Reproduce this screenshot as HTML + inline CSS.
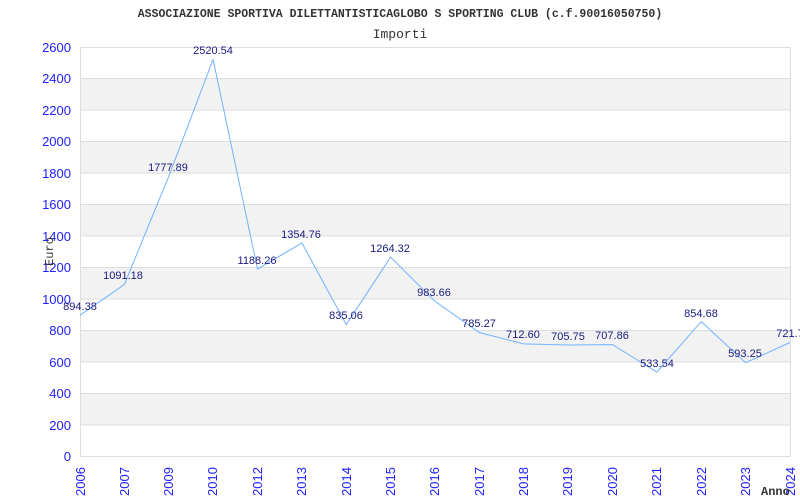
<!DOCTYPE html>
<html><head><meta charset="utf-8"><style>body{margin:0;background:#fff}svg{display:block}</style></head>
<body>
<svg width="800" height="500" xmlns="http://www.w3.org/2000/svg">
<rect width="800" height="500" fill="#fff"/>
<text x="400" y="17" text-anchor="middle" font-family="Liberation Mono, monospace" font-weight="bold" font-size="11.5" fill="#333">ASSOCIAZIONE SPORTIVA DILETTANTISTICAGLOBO S SPORTING CLUB (c.f.90016050750)</text>
<text x="400" y="38" text-anchor="middle" font-family="Liberation Mono, monospace" font-size="13" fill="#333">Importi</text>
<g fill="#f2f2f2">
<rect x="80.5" y="78.5" width="710" height="31.5"/>
<rect x="80.5" y="141.4" width="710" height="31.5"/>
<rect x="80.5" y="204.3" width="710" height="31.5"/>
<rect x="80.5" y="267.2" width="710" height="31.5"/>
<rect x="80.5" y="330.2" width="710" height="31.5"/>
<rect x="80.5" y="393.1" width="710" height="31.5"/>
</g>
<g stroke="#ddd" stroke-width="1">
<line x1="80" y1="47.5" x2="790" y2="47.5"/><line x1="80" y1="78.5" x2="790" y2="78.5"/><line x1="80" y1="110" x2="790" y2="110"/><line x1="80" y1="141.5" x2="790" y2="141.5"/><line x1="80" y1="173" x2="790" y2="173"/><line x1="80" y1="204.5" x2="790" y2="204.5"/><line x1="80" y1="236" x2="790" y2="236"/><line x1="80" y1="267.5" x2="790" y2="267.5"/><line x1="80" y1="299" x2="790" y2="299"/><line x1="80" y1="330.5" x2="790" y2="330.5"/><line x1="80" y1="362" x2="790" y2="362"/><line x1="80" y1="393.5" x2="790" y2="393.5"/><line x1="80" y1="425" x2="790" y2="425"/><line x1="80" y1="456.5" x2="790.5" y2="456.5"/>
<line x1="80.5" y1="47" x2="80.5" y2="457"/><line x1="790.5" y1="47" x2="790.5" y2="457"/>
</g>
<g font-family="Liberation Sans, sans-serif" font-size="13" fill="#2020ff" text-anchor="end">
<text x="71" y="52">2600</text><text x="71" y="83">2400</text><text x="71" y="115">2200</text><text x="71" y="146">2000</text><text x="71" y="178">1800</text><text x="71" y="209">1600</text><text x="71" y="241">1400</text><text x="71" y="272">1200</text><text x="71" y="304">1000</text><text x="71" y="335">800</text><text x="71" y="367">600</text><text x="71" y="398">400</text><text x="71" y="430">200</text><text x="71" y="461">0</text>
</g>
<g font-family="Liberation Sans, sans-serif" font-size="13" fill="#2020ff">
<text transform="translate(85,496) rotate(-90)">2006</text>
<text transform="translate(129,496) rotate(-90)">2007</text>
<text transform="translate(173,496) rotate(-90)">2009</text>
<text transform="translate(217,496) rotate(-90)">2010</text>
<text transform="translate(262,496) rotate(-90)">2012</text>
<text transform="translate(306,496) rotate(-90)">2013</text>
<text transform="translate(351,496) rotate(-90)">2014</text>
<text transform="translate(395,496) rotate(-90)">2015</text>
<text transform="translate(439,496) rotate(-90)">2016</text>
<text transform="translate(484,496) rotate(-90)">2017</text>
<text transform="translate(528,496) rotate(-90)">2018</text>
<text transform="translate(572,496) rotate(-90)">2019</text>
<text transform="translate(617,496) rotate(-90)">2020</text>
<text transform="translate(661,496) rotate(-90)">2021</text>
<text transform="translate(706,496) rotate(-90)">2022</text>
<text transform="translate(750,496) rotate(-90)">2023</text>
<text transform="translate(795,496) rotate(-90)">2024</text>
</g>
<text transform="translate(53,266) rotate(-90)" font-family="Liberation Mono, monospace" font-size="12" fill="#333">Euro</text>
<text x="761" y="495" font-family="Liberation Mono, monospace" font-size="12" font-weight="bold" fill="#333">Anno</text>
<polyline fill="none" stroke="#6fb3ff" stroke-width="1" points="80,315.3 124.4,284.4 168.75,176.3 213.1,59.5 257.5,269.1 301.9,242.9 346.25,324.6 390.6,257.1 435,301.3 479.4,332.5 523.75,343.9 568.1,345 612.5,344.6 656.9,372.1 701.25,321.6 745.6,362.7 790,342.5"/>
<g font-family="Liberation Sans, sans-serif" font-size="11" fill="#1a1a80" text-anchor="middle">
<text x="80" y="310">894.38</text>
<text x="123" y="279">1091.18</text>
<text x="168" y="171">1777.89</text>
<text x="213" y="54">2520.54</text>
<text x="257" y="264">1188.26</text>
<text x="301" y="238">1354.76</text>
<text x="346" y="319">835.06</text>
<text x="390" y="252">1264.32</text>
<text x="434" y="296">983.66</text>
<text x="479" y="327">785.27</text>
<text x="523" y="338">712.60</text>
<text x="568" y="340">705.75</text>
<text x="612" y="339">707.86</text>
<text x="657" y="367">533.54</text>
<text x="701" y="317">854.68</text>
<text x="745" y="357">593.25</text>
<text x="790" y="337">721.7</text>
</g>
</svg>
</body></html>
